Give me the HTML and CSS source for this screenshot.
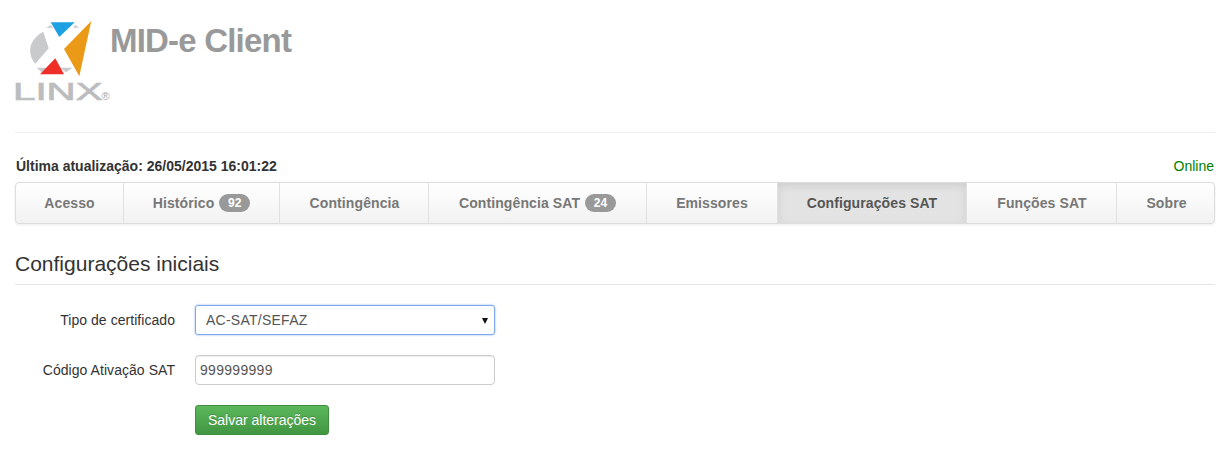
FILE: index.html
```html
<!DOCTYPE html>
<html lang="pt-BR">
<head>
<meta charset="utf-8">
<title>MID-e Client</title>
<link rel="stylesheet" href="styles.css">
</head>
<body>
<header class="page-header">
  <svg class="logo" width="100" height="84" viewBox="-4 0 100 84" aria-label="Linx">
    <path d="M27.3 11.7 L32.7 28.3 L19.3 43.7 C11 34 12 20 27.3 11.7 Z" fill="#c9cacb"/>
    <path d="M30 7.7 L34.7 5 L37.3 7.7 Z M57.3 7.7 L63.3 7.7 L59.3 5 Z" fill="#c9cacb"/>
    <path d="M20.7 47.7 L33.3 47.7 L25.7 52.3 Z M44 47.7 L56.7 47.7 L50 52.3 Z" fill="#c9cacb"/>
    <path d="M34.7 2.3 L58.7 2.3 L43.3 17 Z" fill="#1ea1e2"/>
    <path d="M75.3 1 L63.3 56.3 L48 29 Z" fill="#ea9a17"/>
    <path d="M39.3 38.3 L48 54.3 L24 54.3 Z" fill="#ef2f27"/>
    <text class="logo-word" transform="translate(-3 80) scale(1.68 1)">LINX</text>
    <text class="logo-reg" x="85.5" y="80">®</text>
  </svg>
  <h1 class="app-title">MID-e Client</h1>
</header>
<hr class="divider">
<div class="status-row">
  <span class="updated">Última atualização: 26/05/2015 16:01:22</span>
  <span class="online">Online</span>
</div>
<nav class="tabs">
  <a class="tab tab-1">Acesso</a>
  <a class="tab tab-2">Histórico<span class="badge">92</span></a>
  <a class="tab tab-3">Contingência</a>
  <a class="tab tab-4">Contingência SAT<span class="badge">24</span></a>
  <a class="tab tab-5">Emissores</a>
  <a class="tab tab-6 active">Configurações SAT</a>
  <a class="tab tab-7">Funções SAT</a>
  <a class="tab tab-8">Sobre</a>
</nav>
<h2 class="section-title">Configurações iniciais</h2>
<form class="form">
  <div class="form-row">
    <label class="form-label" for="tipo">Tipo de certificado</label>
    <div class="select-box" id="tipo">AC-SAT/SEFAZ<span class="caret"></span></div>
  </div>
  <div class="form-row">
    <label class="form-label" for="codigo">Código Ativação SAT</label>
    <input class="text-input" id="codigo" type="text" value="999999999">
  </div>
  <div class="form-row">
    <span class="form-label"></span>
    <button class="btn-save" type="button">Salvar alterações</button>
  </div>
</form>
</body>
</html>
```
FILE: styles.css
```css
* { box-sizing: border-box; }
html, body { margin: 0; background: #fff; }
body {
  padding: 0 13px 0 15px;
  font-family: "Liberation Sans", Arial, sans-serif;
  font-size: 14px;
  color: #333;
  height: 449px;
  overflow: hidden;
}
.page-header { display: flex; align-items: flex-start; height: 132px; padding-top: 20px; }
.logo { flex: none; margin-left: -3px; }
.logo-word { font: 24px "Liberation Sans", Arial, sans-serif; fill: #bcbdbe; stroke: #bcbdbe; stroke-width: .7px; }
.logo-reg { font: 11px "Liberation Sans", Arial, sans-serif; fill: #a9a9a9; }
.app-title {
  margin: 0 0 0 -2px;
  padding-top: 2px;
  font-size: 33px;
  line-height: 38px;
  font-weight: bold;
  color: #999;
  letter-spacing: -0.8px;
}
.divider { margin: 0; border: 0; border-top: 1px solid #eee; }
.status-row {
  display: flex;
  justify-content: space-between;
  align-items: center;
  height: 49px;
  padding: 17px 1px 0 1px;
  line-height: 15px;
}
.updated { font-weight: bold; font-size: 14px; color: #333; }
.online { color: #008000; font-size: 14px; }
.tabs {
  display: flex;
  height: 42px;
  border: 1px solid #ddd;
  border-radius: 4px;
  background: linear-gradient(to bottom, #fff, #f2f2f2);
  box-shadow: 0 1px 3px rgba(0,0,0,0.08);
}
.tab {
  display: flex;
  align-items: center;
  justify-content: center;
  gap: 5px;
  border-right: 1px solid #e1e1e1;
  font-size: 14px;
  letter-spacing: .1px;
  font-weight: bold;
  color: #777;
  text-shadow: 0 1px 0 rgba(255,255,255,.25);
  white-space: pre;
}
.tab-1 { width: 108px; }
.tab-2 { width: 156px; }
.tab-3 { width: 149px; padding-left: 1px; }
.tab-4 { width: 218px; }
.tab-5 { width: 131px; }
.tab-6 { width: 189px; }
.tab-7 { width: 150px; padding-left: 1px; }
.tab-8 { flex: 1; border-right: 0; padding-left: 2px; }
.tab.active {
  background: #e3e3e3;
  color: #555;
  box-shadow: inset 0 3px 9px rgba(0,0,0,0.09);
}
.badge {
  display: inline-block;
  min-width: 31px;
  height: 18px;
  padding: 0 7px;
  border-radius: 10px;
  background: #999;
  color: #fff;
  font-size: 12px;
  line-height: 18px;
  text-align: center;
  text-shadow: none;
}
.section-title {
  margin: 0;
  height: 61px;
  padding-top: 28px;
  border-bottom: 1px solid #e5e5e5;
  font-size: 21px;
  line-height: 24px;
  font-weight: normal;
  color: #333;
}
.form { display: flex; flex-direction: column; gap: 20px; padding-top: 20px; }
.form-row { display: flex; align-items: center; height: 30px; }
.form-label { width: 160px; text-align: right; color: #333; font-size: 14px; letter-spacing: .05px; }
.select-box {
  position: relative;
  width: 300px;
  height: 30px;
  margin-left: 20px;
  padding-left: 10px;
  border: 1px solid #7fa8ee;
  border-radius: 3px;
  box-shadow: 0 0 2px rgba(100,150,240,.8);
  line-height: 28px;
  color: #555;
  font-size: 14px;
  letter-spacing: .25px;
}
.caret {
  position: absolute;
  right: 6px;
  top: 12px;
  border-left: 3px solid transparent;
  border-right: 3px solid transparent;
  border-top: 6px solid #111;
}
.text-input {
  width: 300px;
  height: 30px;
  margin-left: 20px;
  padding: 0 4px;
  border: 1px solid #ccc;
  border-radius: 4px;
  box-shadow: inset 0 1px 1px rgba(0,0,0,.075);
  font: 14px "Liberation Sans", Arial, sans-serif;
  letter-spacing: .3px;
  color: #555;
  outline: none;
}
.btn-save {
  width: 134px;
  height: 30px;
  margin-left: 20px;
  padding: 0;
  border: 1px solid #3e8f3e;
  border-radius: 3px;
  background: linear-gradient(to bottom, #5cb85c, #419641);
  color: #fff;
  font: 14px "Liberation Sans", Arial, sans-serif;
  text-shadow: 0 -1px 0 rgba(0,0,0,.2);
}
```
